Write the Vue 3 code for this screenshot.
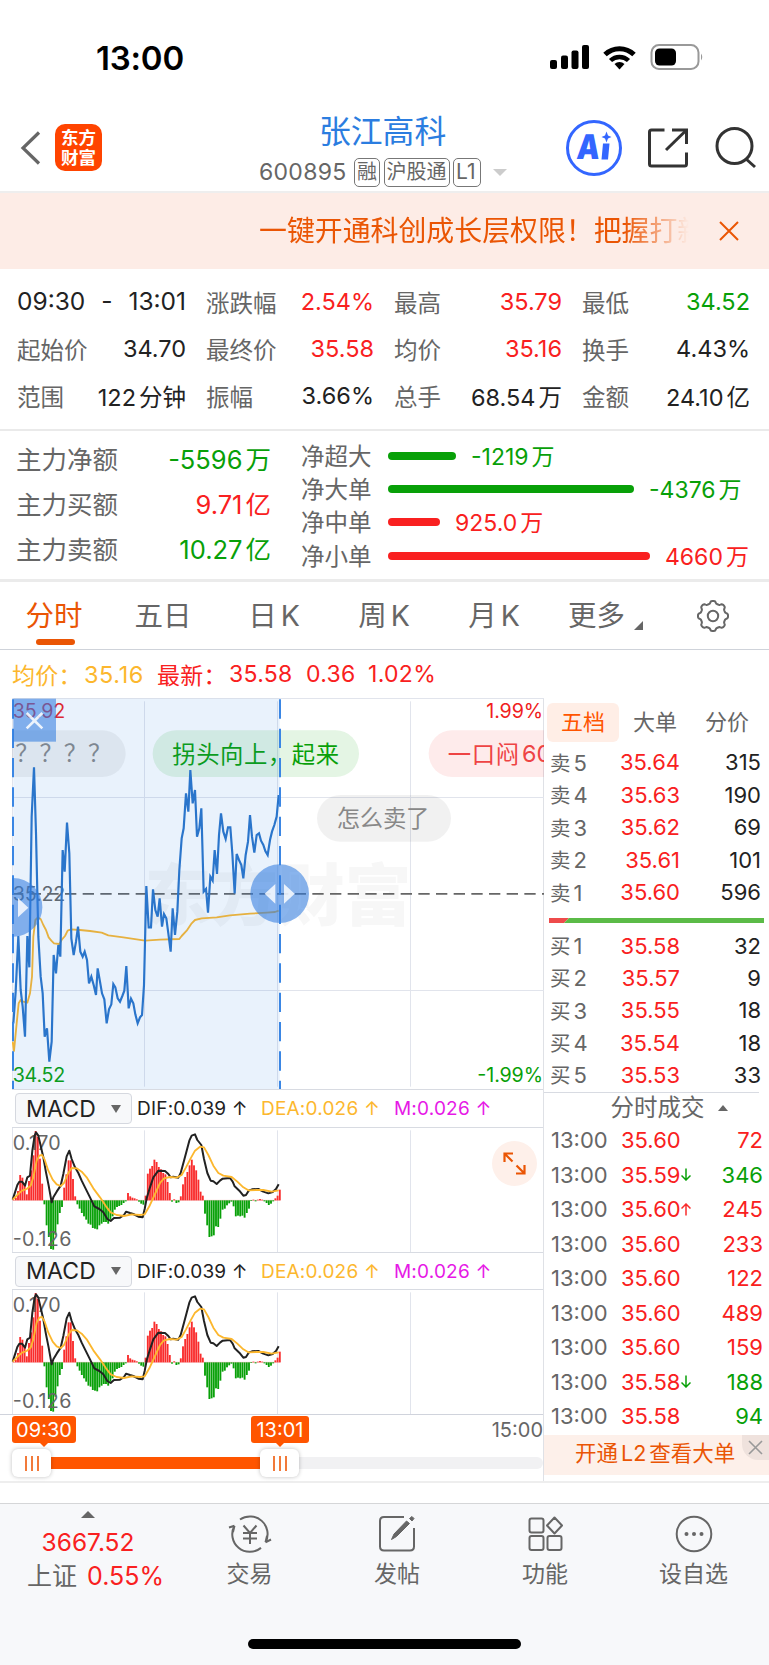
<template>
  <div class="page">
    <div class="status-bar">
      <span class="clock">13:00</span>
      <svg class="status-icons" width="156" height="28" viewBox="550 43 156 28">
        <rect x="551" y="60" width="7" height="9" rx="2" />
        <rect x="562" y="55.500" width="7" height="13.500" rx="2" />
        <rect x="572.500" y="50.500" width="7" height="18.500" rx="2" />
        <rect x="583" y="45" width="7" height="24" rx="2" />
        <path d="M606 54.500 A21 21 0 0 1 635 54.500" fill="none" stroke="#000" stroke-width="5" />
        <path d="M611.500 60.500 A13 13 0 0 1 629.500 60.500" fill="none" stroke="#000" stroke-width="4.500" />
        <path d="M615.500 64 A7.500 7.500 0 0 1 625.500 64 L620.500 69.500 Z" />
        <rect x="652.500" y="45" width="47" height="24" rx="7.500" fill="none" stroke="#999" stroke-width="2" />
        <rect x="656" y="48.500" width="21" height="17" rx="4.500" />
        <path d="M702 53.500 Q704.500 57 702 60.500 Z" fill="#999" />
      </svg>
    </div>

    <header class="nav">
      <svg class="back" width="22" height="36" viewBox="0 0 22 36">
        <path d="M19 2.500 L3 18 L19 33.500" fill="none" stroke="#666" stroke-width="3.200" />
      </svg>
      <div class="logo"><span>东方</span><span>财富</span></div>
      <div class="title">
        <div class="name">张江高科</div>
        <div class="code">
          <span class="code-num">600895</span>
          <i>融</i><i>沪股通</i><i class="lv">L1</i>
          <b class="caret"></b>
        </div>
      </div>
      <svg class="nav-icons" width="200" height="60" viewBox="565 118 200 60">
        <circle cx="595" cy="148" r="26.500" fill="#fff" stroke="#3366ff" stroke-width="3" />
        <text transform="translate(577 159) skewX(-5)" font-size="34" font-weight="900" fill="#3366ff" textLength="23" lengthAdjust="spacingAndGlyphs">A</text>
        <path d="M604 143.500 H610.500 L609 159.500 H602.500 Z" fill="#3366ff" />
        <path d="M607.500 131.500 L609 135.500 L612.500 137 L609 138.500 L607.500 142.500 L606 138.500 L602.500 137 L606 135.500 Z" fill="#3366ff" />
        <g fill="none" stroke="#333" stroke-width="3">
          <path d="M665.500 130 H652.500 Q650.500 130 650.500 132 V164 Q650.500 166 652.500 166 H685.500 Q687.500 166 687.500 164 V152.500" />
          <path d="M673 130 H687.500 V144" />
          <path d="M687.500 130 L667 150" />
          <circle cx="735.500" cy="146" r="17.500" />
          <path d="M746.500 158.500 L756 167" />
        </g>
      </svg>
    </header>

    <div class="notice">
      <span class="notice-text">一键开通科创成长层权限！把握打新</span>
      <svg width="22" height="22" viewBox="0 0 22 22">
        <path d="M2 2 L20 20 M20 2 L2 20" fill="none" stroke="#ea5504" stroke-width="2" />
      </svg>
    </div>

    <section class="stats">
      <div class="stat range"><span>09:30</span><span>-</span><span>13:01</span></div>
      <div v-for="s in stats" :key="s.label" class="stat">
        <span class="label">{{ s.label }}</span>
        <span :class="s.tone">{{ s.value }}<em v-if="s.unit">{{ s.unit }}</em></span>
      </div>
    </section>

    <section class="funds">
      <div class="main-funds">
        <div v-for="f in mainFunds" :key="f.label" class="fund-row">
          <span class="label">{{ f.label }}</span>
          <span :class="f.tone">{{ f.value }}<em>{{ f.unit }}</em></span>
        </div>
      </div>
      <div class="net-funds">
        <div v-for="n in netFunds" :key="n.label" class="net-row">
          <span class="label">{{ n.label }}</span>
          <span class="net-bar" :class="'bg-' + n.tone" :style="{ width: n.width + 'px' }"></span>
          <span class="net-value" :class="n.tone">{{ n.value }}<em>万</em></span>
        </div>
      </div>
    </section>

    <nav class="tabs">
      <span v-for="t in tabs" :key="t.name" class="tab" :class="{ active: t.active, more: t.more }">
        {{ t.name }}<em v-if="t.k">K</em>
        <b v-if="t.more" class="corner"></b>
      </span>
      <svg class="gear" width="34" height="34" viewBox="-17 -17 34 34">
        <path :d="gearPath" fill="none" stroke="#666" stroke-width="2" stroke-linejoin="round" />
        <circle r="5.200" fill="none" stroke="#666" stroke-width="2" />
      </svg>
    </nav>

    <div class="summary">
      <span class="avg">均价：</span><span class="avg n1">35.16</span>
      <span class="red n2">最新：</span><span class="red n3">35.58</span>
      <span class="red n4">0.36</span><span class="red n5">1.02%</span>
    </div>

    <main class="board">
      <div class="charts">
        <!-- las coordenadas del gráfico van en tercios de píxel -->
        <svg class="price-chart" width="544" height="391" viewBox="0 24 1632 1173">
          <clipPath id="plot"><rect x="36" y="24" width="1596" height="1173" /></clipPath>
          <g clip-path="url(#plot)">
            <text x="434" y="690" font-size="200" font-weight="900" fill="#f7f7f7" textLength="800">东方财富</text>
            <g stroke="#e1e4ec" stroke-width="3">
              <path d="M36 25.500 H1632 M36 322.500 H1632 M36 901.500 H1632 M37.500 24 V1197 M433.500 34 V1190 M832.500 34 V1190 M1231.500 34 V1190" />
            </g>
            <path d="M36 611.500 H1632" stroke="#666" stroke-width="5" stroke-dasharray="34 19" />
            <text x="38" y="85" class="axis" fill="#f02020" textLength="158">35.92</text>
            <text x="1629" y="85" class="axis" fill="#f02020" text-anchor="end" textLength="170">1.99%</text>
            <text x="38" y="632" class="axis" fill="#666" textLength="158">35.22</text>
            <text x="38" y="1176" class="axis" fill="#08a008" textLength="158">34.52</text>
            <text x="1629" y="1176" class="axis" fill="#08a008" text-anchor="end" textLength="197">-1.99%</text>

            <rect x="-60" y="121" width="437" height="140" rx="70" fill="#000" fill-opacity="0.055" />
            <rect x="458" y="121" width="619" height="140" rx="70" fill="#08a008" fill-opacity="0.11" />
            <rect x="1286" y="121" width="500" height="140" rx="70" fill="#f02020" fill-opacity="0.09" />
            <rect x="951" y="315" width="402" height="140" rx="70" fill="#000" fill-opacity="0.055" />
            <text x="46" y="217" class="bullet" fill="#888" textLength="288">？？？？</text>
            <text x="517" y="218" class="bullet" fill="#08a008" textLength="500">拐头向上，起来</text>
            <text x="1343" y="218" class="bullet" fill="#ee4444" textLength="214">一口闷</text>
            <text x="1566" y="217" class="bullet" fill="#ee4444">60</text>
            <text x="1010" y="411" class="bullet" fill="#888" textLength="278">怎么卖了</text>

            <polyline :points="avgLine" fill="none" stroke="#fcb72e" stroke-width="5.500" stroke-linejoin="round" />
            <polyline :points="priceLine" fill="none" stroke="#2b74c9" stroke-width="6.500" />

            <rect x="40" y="26" width="799" height="1171" fill="#2b80e0" fill-opacity="0.1" />
            <path d="M39 28 V1197 M840 28 V1197" stroke="#3a86e4" stroke-width="6" stroke-dasharray="58 30" />
            <rect x="40" y="26" width="128" height="129" fill="#2f7be0" fill-opacity="0.57" />
            <path d="M80 69 L127 115 M127 69 L80 115" stroke="#fff" stroke-opacity="0.85" stroke-width="8" />
            <circle cx="39" cy="652" r="88" fill="#2f7be0" fill-opacity="0.57" />
            <circle cx="839" cy="611" r="88" fill="#2f7be0" fill-opacity="0.57" />
            <g fill="#fff" fill-opacity="0.82">
              <path d="M54 624 V682 L85 653 Z" />
              <path d="M826 582 V641 L794 611 Z M852 582 V641 L884 611 Z" />
            </g>
          </g>
        </svg>

        <div v-for="n in 2" :key="n" class="macd">
          <div class="macd-head">
            <span class="select">MACD<b></b></span>
            <span class="dif">DIF:0.039 ↑</span>
            <span class="dea">DEA:0.026 ↑</span>
            <span class="m">M:0.026 ↑</span>
          </div>
          <svg class="macd-chart" width="544" height="124" viewBox="0 127 1632 372">
            <path d="M37.500 127 V499 M433.500 134 V499 M832.500 134 V499 M1231.500 134 V499" stroke="#e1e4ec" stroke-width="3" />
            <path d="M38 344 H841" stroke="#f6b0b0" stroke-width="2" />
            <rect
              v-for="(v, i) in macdBars"
              :key="i"
              :x="38 + i * 6.6"
              :y="v > 0 ? 344 - v : 344"
              width="5.600"
              :height="Math.abs(v)"
              :fill="v > 0 ? '#f92c2c' : '#08a008'"
            />
            <text x="38" y="192" class="axis" fill="#666" textLength="144">0.170</text>
            <text x="38" y="481" class="axis" fill="#666" textLength="176">-0.126</text>
            <polyline :points="difLine" fill="none" stroke="#222" stroke-width="6" stroke-linejoin="round" />
            <polyline :points="deaLine" fill="none" stroke="#fcb72e" stroke-width="5.500" stroke-linejoin="round" />
          </svg>
          <svg v-if="n === 1" class="expand" width="45" height="45" viewBox="0 0 45 45">
            <circle cx="22.500" cy="22.500" r="22.500" fill="#fef0ea" />
            <path d="M21 12.500 H12.500 V21 M12.500 12.500 L20.500 20.500 M24 32.500 H32.500 V24 M32.500 32.500 L24.500 24.500" fill="none" stroke="#ea5504" stroke-width="2.200" />
          </svg>
        </div>

        <div class="slider">
          <div class="times">
            <span class="tag start">09:30</span>
            <span class="tag end">13:01</span>
            <span class="close-time">15:00</span>
          </div>
          <div class="track">
            <div class="fill"></div>
            <div class="thumb"><i></i><i></i><i></i></div>
            <div class="thumb right"><i></i><i></i><i></i></div>
          </div>
        </div>
      </div>

      <aside class="quotes">
        <div class="quote-tabs">
          <span class="on">五档</span><span>大单</span><span>分价</span>
        </div>
        <div v-for="q in asks" :key="q[0]" class="level">
          <span class="side">卖<em>{{ q[0] }}</em></span><span class="red price">{{ q[1] }}</span><span class="vol">{{ q[2] }}</span>
        </div>
        <svg class="ratio" width="215" height="5" viewBox="0 0 215 5">
          <path d="M0 0 H20 L15 5 H0 Z" fill="#ee4b4b" />
          <path d="M20 0 H215 V5 H15 Z" fill="#5bbb47" />
        </svg>
        <div v-for="q in bids" :key="q[0]" class="level bid">
          <span class="side">买<em>{{ q[0] }}</em></span><span class="red price">{{ q[1] }}</span><span class="vol">{{ q[2] }}</span>
        </div>
        <div class="ticks-title">分时成交<b></b></div>
        <div v-for="(t, i) in ticks" :key="i" class="tick">
          <span class="time">13:00</span>
          <span class="red price">{{ t.price }}</span>
          <svg class="dir" width="10" height="13" viewBox="0 0 10 13">
            <path v-if="t.dir === 'down'" d="M5 0.500 V12 M0.500 7.500 L5 12 L9.500 7.500" fill="none" stroke="#08a008" stroke-width="1.500" />
            <path v-if="t.dir === 'up'" d="M5 12.500 V1 M0.500 5.500 L5 1 L9.500 5.500" fill="none" stroke="#f92c2c" stroke-width="1.500" />
          </svg>
          <span class="vol" :class="t.tone">{{ t.vol }}</span>
        </div>
        <div class="l2">
          <span>开通<em>L2</em>查看大单</span>
          <div class="l2-close">
            <svg width="15" height="15" viewBox="0 0 15 15"><path d="M1 1 L14 14 M14 1 L1 14" stroke="#999" stroke-width="1.600" /></svg>
          </div>
        </div>
      </aside>
    </main>

    <div class="sheet-edge"></div>

    <footer class="bottom">
      <div class="index">
        <b class="up"></b>
        <div class="index-value red">3667.52</div>
        <div class="index-name">上证<span class="red">0.55%</span></div>
      </div>
      <div class="item">
        <svg width="44" height="38" viewBox="-22 -19 44 38" fill="none" stroke="#666" stroke-width="2">
          <path d="M-10 -14.500 A17.600 17.600 0 0 1 15.500 8.300 M15.500 8.300 L21 5.500 M15.500 8.300 L17 2" />
          <path d="M11 13.900 A17.600 17.600 0 0 1 -15.500 -8.300 M-15.500 -8.300 L-21 -6.500 M-15.500 -8.300 L-17 -2" />
          <path d="M-6.500 -8.500 L0 -1 L6.500 -8.500 M0 -1 V10 M-7 -1 H7 M-7 4.500 H7" />
        </svg>
        <span>交易</span>
      </div>
      <div class="item">
        <svg width="44" height="38" viewBox="-22 -19 44 38" fill="none" stroke="#666" stroke-width="2">
          <path d="M7 -17 H-13 Q-17 -17 -17 -13 V12.500 Q-17 16.500 -13 16.500 H13 Q17 16.500 17 12.500 V-6" />
          <path d="M-5.500 5.500 L-3 0 L9.500 -13 L12.500 -10.500 L-0.500 2.500 Z M12.500 -15.500 L15 -17.500 L17 -15.500 L15 -13 Z" fill="#666" stroke-width="1" />
        </svg>
        <span>发帖</span>
      </div>
      <div class="item">
        <svg width="44" height="38" viewBox="-22 -19 44 38" fill="none" stroke="#666" stroke-width="2">
          <rect x="-15.500" y="-15.500" width="14" height="14" rx="2" />
          <rect x="-15.500" y="2" width="14" height="14" rx="2" />
          <rect x="2.500" y="2" width="14" height="14" rx="2" />
          <path d="M9.500 -16.500 L17 -8.500 L9.500 -0.500 L2 -8.500 Z" stroke-linejoin="round" />
        </svg>
        <span>功能</span>
      </div>
      <div class="item">
        <svg width="44" height="38" viewBox="-22 -19 44 38">
          <circle r="17.300" fill="none" stroke="#666" stroke-width="2" />
          <circle cx="-7.500" r="2" fill="#666" /><circle r="2" fill="#666" /><circle cx="7.500" r="2" fill="#666" />
        </svg>
        <span>设自选</span>
      </div>
      <div class="home-bar"></div>
    </footer>
  </div>
</template>

<script setup>
const stats = [
  { label: '涨跌幅', value: '2.54%', tone: 'red' },
  { label: '最高', value: '35.79', tone: 'red' },
  { label: '最低', value: '34.52', tone: 'green' },
  { label: '起始价', value: '34.70', tone: 'dark' },
  { label: '最终价', value: '35.58', tone: 'red' },
  { label: '均价', value: '35.16', tone: 'red' },
  { label: '换手', value: '4.43%', tone: 'dark' },
  { label: '范围', value: '122', unit: '分钟', tone: 'dark' },
  { label: '振幅', value: '3.66%', tone: 'dark' },
  { label: '总手', value: '68.54', unit: '万', tone: 'dark' },
  { label: '金额', value: '24.10', unit: '亿', tone: 'dark' },
];

const mainFunds = [
  { label: '主力净额', value: '-5596', unit: '万', tone: 'green' },
  { label: '主力买额', value: '9.71', unit: '亿', tone: 'red' },
  { label: '主力卖额', value: '10.27', unit: '亿', tone: 'green' },
];

const netFunds = [
  { label: '净超大', value: '-1219', width: 68, tone: 'green' },
  { label: '净大单', value: '-4376', width: 246, tone: 'green' },
  { label: '净中单', value: '925.0', width: 52, tone: 'red' },
  { label: '净小单', value: '4660', width: 262, tone: 'red' },
];

const tabs = [
  { name: '分时', active: true },
  { name: '五日' },
  { name: '日', k: true },
  { name: '周', k: true },
  { name: '月', k: true },
  { name: '更多', more: true },
];

const asks = [
  [5, '35.64', 315],
  [4, '35.63', 190],
  [3, '35.62', 69],
  [2, '35.61', 101],
  [1, '35.60', 596],
];
const bids = [
  [1, '35.58', 32],
  [2, '35.57', 9],
  [3, '35.55', 18],
  [4, '35.54', 18],
  [5, '35.53', 33],
];

const ticks = [
  { price: '35.60', vol: 72, tone: 'red' },
  { price: '35.59', vol: 346, tone: 'green', dir: 'down' },
  { price: '35.60', vol: 245, tone: 'red', dir: 'up' },
  { price: '35.60', vol: 233, tone: 'red' },
  { price: '35.60', vol: 122, tone: 'red' },
  { price: '35.60', vol: 489, tone: 'red' },
  { price: '35.60', vol: 159, tone: 'red' },
  { price: '35.58', vol: 188, tone: 'green', dir: 'down' },
  { price: '35.58', vol: 94, tone: 'green' },
];

const priceLine =
  '40,1000 47,905 55,738 62,900 68,950 75,1040 82,738 88,832 95,380 102,232 108,430 115,740 122,860 128,910 134,1040 141,1015 148,1115 155,1055 161,795 168,850 175,765 181,800 188,480 194,545 201,398 208,490 214,745 221,795 228,755 234,710 241,785 248,800 254,785 261,810 267,880 274,860 281,885 288,915 293,835 300,875 306,910 313,928 320,1000 327,958 334,943 340,882 346,892 353,925 360,935 367,918 373,902 379,828 386,955 393,926 400,940 406,973 413,1000 420,982 426,975 432,885 439,588 446,712 453,712 459,598 466,660 473,680 479,625 486,710 492,672 499,685 505,730 512,785 518,655 525,735 532,665 538,540 545,445 551,415 558,310 565,365 571,240 578,340 585,300 591,440 598,415 604,355 611,605 618,597 624,668 631,560 638,572 644,480 651,552 657,435 663,370 670,425 677,447 684,412 691,412 697,490 704,610 710,492 717,510 724,525 730,565 737,495 744,455 750,375 756,440 763,488 770,435 777,430 783,452 790,465 796,483 803,495 810,450 816,425 823,405 830,380 836,315';
const avgLine =
  '38,1055 42,1083 50,1000 56,940 62,930 70,935 82,938 90,910 96,860 100,740 106,690 113,683 122,687 130,705 138,720 146,742 154,752 162,760 178,762 186,748 195,738 203,722 213,718 240,720 270,723 305,728 325,736 370,742 410,748 435,752 480,749 538,747 545,738 560,722 575,700 585,690 605,685 650,682 690,676 750,671 800,668 825,666 836,662';
const difLine =
  '38,342 45,320 52,298 58,288 66,288 75,300 82,275 90,270 97,195 104,150 108,140 115,150 122,180 130,215 138,260 146,300 155,350 160,335 170,318 182,300 190,265 200,212 208,195 215,220 225,245 235,262 245,285 255,305 270,335 283,362 298,370 310,380 322,400 332,406 342,397 360,396 372,388 378,378 390,382 400,385 415,393 428,395 434,370 440,338 450,305 460,275 475,255 495,256 505,265 512,275 520,273 535,276 542,262 552,225 560,195 568,165 575,150 585,146 592,163 604,178 612,220 622,262 632,285 640,287 650,295 660,285 668,279 690,277 698,288 704,302 718,315 730,330 738,328 746,315 756,311 775,310 790,318 805,323 818,319 828,310 836,296';
const deaLine =
  '38,342 50,330 58,322 66,315 80,310 92,300 100,275 110,225 118,210 126,208 134,222 145,255 158,282 170,296 182,301 192,292 205,262 215,247 230,248 245,258 260,275 280,308 300,335 318,362 332,380 350,388 372,391 395,386 420,388 434,386 448,362 465,325 480,292 492,278 510,274 530,276 545,268 558,245 572,218 585,195 600,183 612,185 625,208 640,240 655,262 670,270 695,274 712,288 730,305 745,314 770,313 790,313 815,318 836,314';
const macdBars = [
  1, 8, 28, 76, 68, 48, 18, 58, 90, 135, 208, 190, 125, 50, -12, -75, -110, -146, -148, -103, -72, -38, -20, 38, 78,
  120, 120, 64, 12, -12, -25, -38, -48, -58, -70, -73, -83, -85, -87, -75, -70, -65, -65, -70, -58, -48, -28, -20,
  -17, -14, -8, -3, 22, 12, 8, 6, 3, -4, -10, -13, 14, 80, 95, 103, 122, 115, 100, 93, 82, 78, 55, 22, -4, 3, -8, -6,
  12, 48, 70, 85, 105, 122, 105, 90, 62, 26, 14, -40, -75, -110, -108, -105, -78, -80, -55, -28, -25, -15, -9, -4,
  -18, -48, -46, -48, -46, -52, -38, -25, -2, 2, -3, 2, 4, 2, -3, -8, -14, -10, -3, 6, 14, 32,
];

// contorno del engranaje: 8 lóbulos suaves
const gearPath = (() => {
  const pts = [];
  for (let i = 0; i < 120; i++) {
    const a = (i / 120) * Math.PI * 2;
    const r = 13.8 + 1.3 * Math.tanh(2 * Math.cos(8 * a));
    pts.push(`${(r * Math.cos(a)).toFixed(2)} ${(r * Math.sin(a)).toFixed(2)}`);
  }
  return 'M' + pts.join('L') + 'Z';
})();
</script>

<style>
body {
  margin: 0;
  background: #fff;
}
</style>

<style scoped>
.page {
  width: 769px;
  height: 1665px;
  overflow: hidden;
  background: #fff;
  color: #222;
  font-family: 'Inter', 'Noto Sans CJK SC', sans-serif;
  font-weight: 400;
}
em, i {
  font-style: normal;
}
svg {
  display: block;
  flex: none;
}
span {
  white-space: pre;
}
.red { color: #f92020; }
.green { color: #08a008; }
.dark { color: #222; }
.bg-red { background: #f92020; }
.bg-green { background: #08a008; }
.label { color: #666; }

.status-bar {
  height: 107px;
  display: flex;
  justify-content: space-between;
  padding: 0 64px 0 96px;
}
.clock {
  margin-top: 38px;
  height: 40px;
  line-height: 40px;
  font-size: 33px;
  font-weight: 600;
  letter-spacing: -0.2px;
  color: #000;
}
.status-icons {
  margin-top: 43px;
}

.nav {
  height: 84px;
  border-bottom: 2px solid #eee;
  display: flex;
  box-sizing: content-box;
}
.back {
  margin: 23px 0 0 20px;
}
.logo {
  width: 47px;
  height: 47px;
  margin: 17px 0 0 13px;
  border-radius: 10px;
  background: #ff4400;
  color: #fff;
  font-weight: 700;
  font-size: 17.5px;
  display: flex;
  flex-direction: column;
  align-items: center;
  justify-content: center;
}
.logo span {
  line-height: 20px;
}
.title {
  width: 260px;
  margin-left: 152px;
}
.name {
  margin: 5px 0 0 65px;
  height: 40px;
  line-height: 40px;
  font-size: 31.800px;
  color: #2b7de0;
}
.code {
  display: flex;
  align-items: center;
  height: 30px;
  margin: 5px 0 0 5px;
  color: #666;
}
.code-num {
  width: 95px;
  font-size: 23px;
  letter-spacing: 0.300px;
}
.code i {
  box-sizing: border-box;
  height: 29px;
  margin-right: 3.500px;
  padding: 0 2px;
  border: 1.500px solid #777;
  border-radius: 5px;
  font-size: 20px;
  line-height: 26px;
}
.code .lv {
  width: 28px;
  font-size: 21px;
}
.caret {
  margin-left: 8px;
  border: 7px solid transparent;
  border-top-color: #ccc;
  border-bottom: 0;
}
.nav-icons {
  margin: 11px 0 0 50px;
  width: 200px;
}
.nav > * {
  flex: none;
}

.notice {
  height: 76px;
  background: #fdece6;
  color: #ea5504;
  display: flex;
  align-items: center;
}
.notice-text {
  width: 430px;
  margin: 0 29px 0 259px;
  overflow: hidden;
  font-size: 27.9px;
  line-height: 40px;
  -webkit-mask-image: linear-gradient(90deg, #000 85%, transparent);
  mask-image: linear-gradient(90deg, #000 85%, transparent);
}

.stats {
  height: 143px;
  padding: 9px 19px 8px 17px;
  border-bottom: 2px solid #eaeaea;
  display: grid;
  box-sizing: border-box;
  height: 162px;
  grid-template-columns: 169px repeat(3, 168px);
  grid-template-rows: repeat(3, 47px);
  column-gap: 20px;
}
.stat {
  display: flex;
  justify-content: space-between;
  align-items: center;
  font-size: 23.5px;
}
.stat em {
  margin-left: 3px;
}
.range {
  padding-bottom: 2px;
  color: #222;
  font-size: 24.500px;
}

.funds {
  height: 148px;
  border-bottom: 3px solid #ebebeb;
  display: flex;
}
.main-funds {
  width: 255px;
  padding: 4px 0 0 16px;
}
.fund-row {
  display: flex;
  align-items: center;
  justify-content: space-between;
  height: 45px;
  font-size: 25.500px;
}
.fund-row em,
.net-row em {
  margin-left: 3px;
}
.net-funds {
  padding: 7.500px 0 0 30px;
}
.net-row {
  display: flex;
  align-items: center;
  height: 33.200px;
  font-size: 23px;
}
.net-row .label {
  width: 87px;
  font-size: 23.5px;
}
.net-bar {
  position: relative;
  top: 1px;
  height: 8px;
  border-radius: 4px;
  margin-right: 15px;
}

.tabs {
  position: relative;
  height: 67px;
  border-bottom: 1px solid #cfd3da;
  display: grid;
  grid-template-columns: 108px 110px 112px 108px 112px 107px 111px;
  align-items: center;
  color: #666;
  font-size: 28.500px;
}
.tab {
  position: relative;
  line-height: 68px;
  text-align: center;
}
.tab em {
  margin-left: 4px;
}
.tab.active {
  color: #ea5504;
}
.tab.active::after {
  content: '';
  position: absolute;
  left: 35.500px;
  bottom: 5px;
  width: 39px;
  height: 6px;
  border-radius: 3px;
  background: #ea5504;
}
.tab.more {
  padding-right: 14px;
}
.corner {
  position: absolute;
  right: 14px;
  top: 39px;
  border-left: 9px solid transparent;
  border-bottom: 9px solid #666;
}
.gear {
  justify-self: center;
}

.summary {
  height: 48px;
  padding-left: 12px;
  display: flex;
  align-items: center;
  font-size: 23px;
  letter-spacing: 0.300px;
}
.avg { color: #fcb72e; }
.summary span { flex: none; }
.summary > span:first-child,
.n2 { width: 72px; }
.n1 { width: 73px; font-size: 23.500px; letter-spacing: 0.600px; }
.n3 { width: 77px; }
.n4 { width: 62px; }

.board {
  display: flex;
  height: 783px;
  border-bottom: 2px solid #eee;
}
.charts {
  box-sizing: border-box;
  width: 544px;
  border-right: 1px solid #dfe1e6;
}
.axis {
  font-size: 59px;
}
.bullet {
  font-size: 70px;
}
.macd {
  position: relative;
  height: 162.500px;
}
.macd-head {
  box-sizing: border-box;
  height: 38.500px;
  margin-left: 12px;
  padding: 1px 0 0 3px;
  border-top: 1px solid #d8dbe2;
  border-bottom: 1px solid #d8dbe2;
  display: flex;
  align-items: center;
  font-size: 19px;
  letter-spacing: 0.200px;
}
.macd-chart {
  height: 124px;
}
.select {
  box-sizing: border-box;
  width: 117px;
  height: 31px;
  padding: 0 10px;
  border: 1px solid #d5d8df;
  border-radius: 4px;
  background: #f7f8fa;
  display: flex;
  align-items: center;
  justify-content: space-between;
  font-size: 23px;
}
.select b {
  border: 5px solid transparent;
  border-top: 8px solid #666;
  border-bottom: 0;
}
.dif { width: 124px; margin-left: 5px; }
.dea { width: 133px; color: #fcb72e; }
.m { color: #e619e6; }
.expand {
  position: absolute;
  left: 492px;
  top: 52px;
}

.slider {
  border-top: 1px solid #d0d3dc;
}
.times {
  position: relative;
  height: 30px;
  margin-left: 12px;
  display: flex;
  font-size: 20px;
}
.tag {
  position: relative;
  box-sizing: border-box;
  width: 64px;
  height: 27px;
  margin-top: 1px;
  border-radius: 3px;
  background: #ff5500;
  color: #fff;
  line-height: 28px;
  text-align: center;
}
.tag::after {
  content: '';
  position: absolute;
  left: 28px;
  bottom: -4px;
  border: 4px solid transparent;
  border-top-color: #ff5500;
  border-bottom: 0;
}
.tag.end {
  width: 58px;
  margin-left: 175px;
}
.tag.end::after {
  left: 25px;
}
.close-time {
  margin-left: auto;
  color: #666;
  line-height: 31px;
}
.track {
  position: relative;
  height: 12px;
  margin: 12px 0 0 12px;
  border-radius: 6px;
  background: #f1f1f3;
}
.fill {
  width: 268px;
  height: 12px;
  background: #ff5500;
}
.thumb {
  position: absolute;
  left: 0;
  top: -8px;
  width: 39px;
  height: 28px;
  border-radius: 6px;
  background: #fff;
  box-shadow: 0 0 4px rgba(0, 0, 0, 0.25);
  display: flex;
  align-items: center;
  justify-content: center;
  gap: 4px;
}
.thumb.right {
  left: 248px;
}
.thumb i {
  width: 2px;
  height: 15px;
  background: #f27a3a;
}

.quotes {
  width: 225px;
  font-size: 22px;
}
.quote-tabs {
  display: flex;
  height: 39px;
  padding: 5px 0 4px 3px;
  color: #666;
}
.quote-tabs span {
  width: 72px;
  border-radius: 6px;
  line-height: 39px;
  text-align: center;
}
.quote-tabs .on {
  background: #ffeee6;
  color: #ff5500;
}
.level {
  display: flex;
  align-items: center;
  height: 32.500px;
  padding: 0 8px 0 6px;
}
.level.bid {
  height: 32.300px;
}
.side {
  width: 44px;
  margin-top: -1px;
  color: #666;
  font-size: 20.500px;
}
.side em {
  margin-left: 3px;
  font-size: 22px;
}
.level .price {
  width: 86px;
  text-align: right;
}
.vol {
  margin-left: auto;
}
.ratio {
  margin: 9px 0 7px 5px;
}
.ticks-title {
  height: 30px;
  margin-top: 1px;
  border-top: 1px solid #d8dbe2;
  display: flex;
  align-items: center;
  justify-content: center;
  gap: 13px;
  padding-left: 35px;
  margin-right: 10px;
  color: #666;
  font-size: 23.500px;
  line-height: 28px;
}
.ticks-title b,
.up {
  border: 5px solid transparent;
  border-top: 0;
  border-bottom: 6px solid #666;
}
.tick {
  display: flex;
  align-items: center;
  height: 34.500px;
  padding: 0 6px 0 7px;
}
.tick .time {
  width: 70px;
  color: #666;
}
.tick .price {
  width: 60px;
}
.l2 {
  position: relative;
  height: 40px;
  margin-top: 2px;
  background: #fdf0ea;
  color: #ea5504;
  line-height: 36px;
  padding-left: 31px;
  font-size: 21.500px;
}
.l2 em {
  margin: 0 3px;
}
.l2-close {
  position: absolute;
  right: 0;
  top: 0;
  width: 27px;
  height: 25px;
  border-bottom-left-radius: 16px;
  background: #efe2dd;
  display: flex;
  align-items: center;
  justify-content: center;
}

.sheet-edge {
  height: 20px;
  border-bottom: 1px solid #d5d6d8;
}
.bottom {
  position: relative;
  height: 161px;
  background: #f7f8fa;
  display: grid;
  grid-template-columns: 176px 147px 148px 148px 149px;
  align-items: start;
  color: #666;
}
.index {
  display: flex;
  flex-direction: column;
  align-items: center;
}
.up {
  margin-top: 7px;
  border-left-width: 7px;
  border-right-width: 7px;
  border-bottom-width: 7px;
}
.index-value {
  font-size: 24.500px;
  line-height: 34px;
  margin-top: 7px;
}
.index-name {
  width: 137px;
  margin-left: 15px;
  display: flex;
  justify-content: space-between;
  font-size: 25px;
  line-height: 34px;
}
.item {
  display: flex;
  flex-direction: column;
  align-items: center;
  padding-top: 11px;
}
.item span {
  margin-top: 4px;
  font-size: 23px;
  line-height: 34px;
}
.home-bar {
  position: absolute;
  left: 248px;
  bottom: 16px;
  width: 273px;
  height: 10px;
  border-radius: 5px;
  background: #000;
}
</style>
